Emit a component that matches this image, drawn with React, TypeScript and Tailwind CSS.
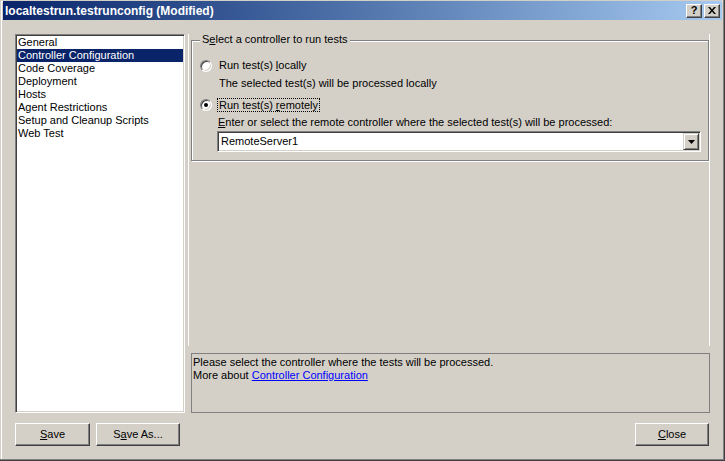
import React from "react";

const items = [
  "General",
  "Controller Configuration",
  "Code Coverage",
  "Deployment",
  "Hosts",
  "Agent Restrictions",
  "Setup and Cleanup Scripts",
  "Web Test",
];

function Radio({ checked }: { checked?: boolean }) {
  return (
    <span className="relative flex h-[12px] w-[12px] shrink-0 items-center justify-center rounded-full border border-t-[#808080] border-l-[#808080] border-r-white border-b-white bg-white shadow-[inset_1px_1px_0_#404040,inset_-1px_-1px_0_#d4d0c8]">
      {checked && <span className="h-[4px] w-[4px] rounded-full bg-black" />}
    </span>
  );
}

function Button({ children, className = "" }: { children: React.ReactNode; className?: string }) {
  return (
    <button
      className={`flex h-[23px] items-center justify-center border border-t-white border-l-white border-b-[#404040] border-r-[#404040] bg-[#d4d0c8] shadow-[inset_-1px_-1px_0_#808080] text-[11px] text-black ${className}`}
    >
      {children}
    </button>
  );
}

function CaptionButton({ children }: { children: React.ReactNode }) {
  return (
    <span className="flex h-[14px] w-[16px] items-center justify-center border border-t-white border-l-white border-b-[#404040] border-r-[#404040] bg-[#d4d0c8] shadow-[inset_-1px_-1px_0_#808080] text-[11px] font-bold leading-none text-black">
      {children}
    </span>
  );
}

export default function App() {
  return (
    <div className="h-[461px] w-[725px] overflow-hidden bg-[#d4d0c8] px-[3px] pt-px font-['Liberation_Sans',Arial,sans-serif] text-[11px] text-black shadow-[inset_-1px_-1px_0_#404040,inset_-2px_-2px_0_#808080,inset_1px_1px_0_#d4d0c8,inset_2px_2px_0_#ffffff]">
      {/* caption */}
      <div className="flex h-[19px] items-center justify-between bg-gradient-to-r from-[#0a246a] to-[#a6caf0] pl-[2px] pr-[2px]">
        <span className="text-[12px] font-bold leading-none text-white">localtestrun.testrunconfig (Modified)</span>
        <div className="flex gap-[2px]">
          <CaptionButton>?</CaptionButton>
          <CaptionButton>
            <svg width="8" height="7" viewBox="0 0 8 7">
              <path d="M0 0h2l2 2.5L6 0h2L5 3.5 8 7H6L4 4.5 2 7H0l3-3.5z" fill="#000" />
            </svg>
          </CaptionButton>
        </div>
      </div>

      <div className="mt-[14px] px-[12px]">
        <div className="flex h-[379px] gap-[3px]">
          {/* list */}
          <div className="h-full w-[170px] shrink-0 border border-t-[#808080] border-l-[#808080] border-b-white border-r-white bg-white p-px shadow-[inset_1px_1px_0_#404040,inset_-1px_-1px_0_#d4d0c8]">
            {items.map((it, i) => (
              <div
                key={it}
                className={`h-[13px] pl-px leading-[13px] ${i === 1 ? "bg-[#0a246a] text-white" : ""}`}
              >
                {it}
              </div>
            ))}
          </div>

          {/* right column */}
          <div className="flex w-[523px] flex-col">
            <div className="h-[312px] border-x border-x-white pl-[2px] pt-[6px]">
              <div className="relative h-[121px] w-[518px] border border-[#808080] shadow-[inset_1px_1px_0_#fff,1px_1px_0_#fff] pl-[8px] pt-[18px]">
                <span className="absolute left-[8px] top-[-8px] bg-[#d4d0c8] px-[2px] leading-[13px]">
                  S<u>e</u>lect a controller to run tests
                </span>
                <div className="flex h-[13px] items-center gap-[7px]">
                  <Radio />
                  <span>
                    Run test(s) <u>l</u>ocally
                  </span>
                </div>
                <div className="mt-[5px] h-[13px] pl-[19px] leading-[13px]">
                  The selected test(s) will be processed locally
                </div>
                <div className="mt-[8px] flex h-[13px] items-center gap-[6px]">
                  <Radio checked />
                  <span className="px-px leading-[12px] outline outline-1 outline-dotted outline-black">
                    Run test(s) <u>r</u>emotely
                  </span>
                </div>
                <div className="mt-[5px] h-[13px] pl-[18px] leading-[13px]">
                  <u>E</u>nter or select the remote controller where the selected test(s) will be processed:
                </div>
                <div className="ml-[17px] mt-[2px] flex h-[21px] w-[484px] items-center border border-t-[#808080] border-l-[#808080] border-b-white border-r-white bg-white p-px shadow-[inset_1px_1px_0_#404040,inset_-1px_-1px_0_#d4d0c8]">
                  <span className="flex-1 pl-[2px]">RemoteServer1</span>
                  <span className="flex h-[17px] w-[16px] items-center justify-center border border-t-[#d4d0c8] border-l-[#d4d0c8] border-b-[#404040] border-r-[#404040] bg-[#d4d0c8] shadow-[inset_1px_1px_0_#fff,inset_-1px_-1px_0_#808080]">
                    <svg width="7" height="4" viewBox="0 0 7 4">
                      <path d="M0 0h7L3.5 4z" fill="#000" />
                    </svg>
                  </span>
                </div>
              </div>
            </div>

            <div className="ml-[3px] mt-[7px] h-[60px] w-[519px] border border-[#808080] pl-px pt-[2px] leading-[13px]">
              <div>Please select the controller where the tests will be processed.</div>
              <div>
                More about <span className="text-[#0000ff] underline">Controller Configuration</span>
              </div>
            </div>
          </div>
        </div>

        {/* bottom buttons */}
        <div className="mt-[10px] flex items-center">
          <Button className="w-[75px]">
            <u>S</u>ave
          </Button>
          <Button className="ml-[6px] w-[84px]">
            S<u>a</u>ve As...
          </Button>
          <Button className="ml-auto mr-[1px] w-[74px]">
            <u>C</u>lose
          </Button>
        </div>
      </div>
    </div>
  );
}
